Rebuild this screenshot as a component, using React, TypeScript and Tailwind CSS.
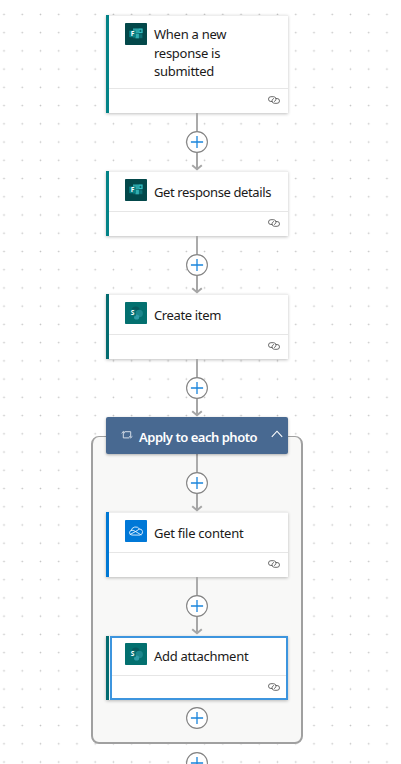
import React from "react";

type IconKind = "forms" | "sharepoint" | "onedrive";

function FormsIcon() {
  return (
    <svg viewBox="0 0 22 22" className="size-[22px]">
      <rect width="22" height="22" rx="0.8" fill="#03484a" />
      <path d="M8 5.5h9.5v9.8H8z" fill="#0a6266" />
      <path d="M8 5.5h5.2v4.6H8z" fill="#2ba3a6" />
      <path d="M13.9 6.2h3.1v3.3h-3.1z" fill="#07686c" stroke="#35c0c4" strokeWidth="1.2" />
      <path d="M10.5 10.7h3.4v4.6h-3.4z" fill="#30adb0" />
      <path d="M14.3 11.6h2.8v3.2h-2.8z" fill="#0c7074" />
      <rect x="4.2" y="7.6" width="6.6" height="6.6" rx="0.6" fill="#087f83" />
      <text x="5.8" y="13.3" className="font-['Open_Sans',sans-serif] text-[6.5px] font-bold" fill="#fff">F</text>
    </svg>
  );
}

function SharePointIcon() {
  return (
    <svg viewBox="0 0 22 22" className="size-[22px]">
      <rect width="22" height="22" rx="0.8" fill="#03706f" />
      <circle cx="10.7" cy="8.4" r="4" fill="#07595d" />
      <circle cx="14.2" cy="11.4" r="3.7" fill="#1b868c" />
      <circle cx="11.6" cy="15" r="2.6" fill="#2f9ca8" />
      <rect x="4.2" y="7.6" width="6.6" height="6.6" rx="0.6" fill="#067276" />
      <text x="5.7" y="13.2" className="font-['Open_Sans',sans-serif] text-[6.5px] font-bold" fill="#fff">S</text>
    </svg>
  );
}

function OneDriveIcon() {
  return (
    <svg viewBox="0 0 22 22" className="size-[22px]" fill="none" stroke="#e8f4ff" strokeWidth="0.9" strokeLinejoin="round" strokeLinecap="round">
      <rect width="22" height="22" rx="0.8" fill="#0078d7" stroke="none" />
      <path d="M6.6 15a2.3 2.3 0 0 1-.4-4.5A4.5 4.5 0 0 1 14.4 9a3.05 3.05 0 0 1 .9 6z" />
      <path d="M6.2 10.5c1.6-.5 2.5 0 3.6.6l6.2 3.7M5.2 14.4l5.6-3L14.4 9" />
    </svg>
  );
}

const icons: Record<IconKind, () => React.JSX.Element> = {
  forms: FormsIcon,
  sharepoint: SharePointIcon,
  onedrive: OneDriveIcon,
};

function LinkIcon() {
  return (
    <svg viewBox="0 0 12 8" className="h-2 w-3" fill="none" stroke="#505050" strokeWidth="0.85" strokeLinecap="round">
      <path d="M3.9 5.5H2.9A2.4 2.4 0 0 1 2.9.7h2.7a2.4 2.4 0 0 1 2 3.7c-.3.5-.7.8-1.2 1" />
      <path d="M8.1 2.5h1a2.4 2.4 0 0 1 0 4.8H6.4a2.4 2.4 0 0 1-2-3.7c.3-.5.7-.8 1.2-1" />
    </svg>
  );
}

function Plus() {
  return (
    <svg viewBox="0 0 22 22" className="block size-[22px] shrink-0" fill="none">
      <circle cx="11" cy="11" r="10.4" fill="#fff" stroke="#828282" strokeWidth="1.1" />
      <path d="M11 4.9v12.2M4.9 11h12.2" stroke="#1a85dc" strokeWidth="1.3" />
    </svg>
  );
}

function Connector() {
  return (
    <div className="flex h-[58px] shrink-0 flex-col items-center">
      <div className="h-[18px] w-[2px] bg-[#ababab]" />
      <Plus />
      <svg viewBox="0 0 12 18" className="h-[18px] w-3 shrink-0" fill="none" stroke="#a6a6a6" strokeWidth="2">
        <path d="M6 0v16.2M1.2 12.2L6 16.2l4.8-4" />
      </svg>
    </div>
  );
}

interface CardProps {
  icon: IconKind;
  accent: string;
  lines: string[];
  height: string;
  tracking?: string;
  selected?: boolean;
}

function Card({ icon, accent, lines, height, tracking = "tracking-[-0.27px]", selected }: CardProps) {
  const Icon = icons[icon];
  return (
    <div className={`flex w-[182px] shrink-0 shadow-[0_1px_3px_rgba(0,0,0,0.25)] ${height}`}>
      <div className={`w-[3px] shrink-0 ${accent}`} />
      <div className={`flex min-w-0 grow flex-col bg-white ${selected ? "ml-px border-2 border-[#3d95de]" : "border-t border-[#eeeeee]"}`}>
        <div className={`flex grow items-start ${selected ? "pl-[13px] pt-[5px]" : "pl-4 pt-[7px]"}`}>
          <Icon />
          <div className={`ml-[7px] text-[13px] leading-[18.5px] text-[#1b1a19] ${tracking} ${lines.length > 1 ? "pt-[2px]" : "pt-1"}`}>
            {lines.map((line) => (
              <div key={line} className="whitespace-nowrap">{line}</div>
            ))}
          </div>
        </div>
        <div className={`flex shrink-0 items-center justify-end border-t border-[#e6e6e6] ${selected ? "h-[23px] pr-1.5" : "h-[25px] pb-0.5 pr-2"}`}>
          <LinkIcon />
        </div>
      </div>
    </div>
  );
}

function LoopHeader() {
  return (
    <div className="relative z-10 flex h-[37px] w-[182px] shrink-0 items-center rounded-[2px] bg-[#486991] pl-[15px] text-white shadow-[0_1px_3px_rgba(0,0,0,0.3)]">
      <svg viewBox="0 0 12 10" className="mb-px h-2.5 w-3" fill="none" stroke="#e3e9f0" strokeWidth="0.9">
        <path d="M3.5 1.7h6.2v5.5M.6 3.2L2.3 1.5 4 3.2M2.3 1.7v6.2h6M8 6.3l1.7 1.6 1.7-1.6" />
      </svg>
      <span className="ml-1.5 whitespace-nowrap pt-[3px] text-[13px] font-semibold leading-[18px] tracking-[-0.47px]">Apply to each photo</span>
      <svg viewBox="0 0 12 8" className="mb-1 ml-auto mr-[5px] h-2 w-3" fill="none" stroke="#fff" strokeWidth="1.1">
        <path d="M.8 6.8L6 1.2l5.2 5.6" />
      </svg>
    </div>
  );
}

export default function App() {
  return (
    <main className="flex h-[764px] w-[401px] flex-col overflow-hidden bg-white bg-[radial-gradient(circle,#c2c2c2_0.6px,transparent_1.1px)] bg-[size:18.24px_18.24px] bg-[position:-5.1px_5.3px] pt-[15px] font-['Noto_Sans',sans-serif]">
      <div className="ml-[91px] flex w-[212px] flex-col items-center">
        <Card icon="forms" accent="bg-[#038387]" height="h-[98px]" lines={["When a new", "response is", "submitted"]} />
        <Connector />
        <Card icon="forms" accent="bg-[#038387]" height="h-[65px]" lines={["Get response details"]} tracking="tracking-[-0.38px]" />
        <Connector />
        <Card icon="sharepoint" accent="bg-[#036c70]" height="h-[65px]" lines={["Create item"]} tracking="tracking-[-0.36px]" />
        <Connector />
        <LoopHeader />
        <section className="-mt-[18px] flex h-[308px] w-full shrink-0 flex-col items-center rounded-lg border border-x-2 border-b-2 border-[#a0a0a0] bg-[#f8f8f7] pt-[17px]">
          <Connector />
          <Card icon="onedrive" accent="bg-[#0078d4]" height="h-[65px]" lines={["Get file content"]} />
          <Connector />
          <div className="mt-px">
            <Card icon="sharepoint" accent="bg-[#036c70]" height="h-[64px]" lines={["Add attachment"]} selected />
          </div>
          <div className="mt-[7px]">
            <Plus />
          </div>
        </section>
        <div className="mt-2">
          <Plus />
        </div>
      </div>
    </main>
  );
}
